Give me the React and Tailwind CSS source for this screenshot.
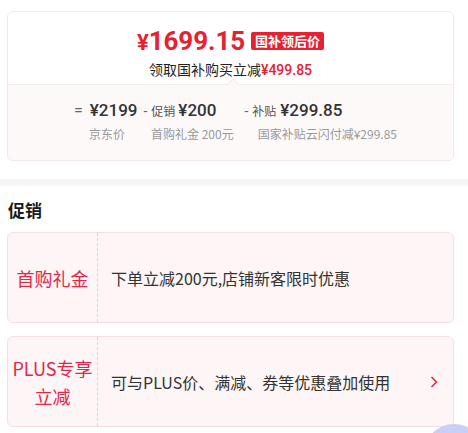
import React from "react";

const cn = { fontFamily: '"Noto Sans CJK SC", sans-serif' };

function PromoCard({ title, desc, arrow }) {
  return (
    <div className="flex h-[91px] rounded-md border border-[#f6dfe3] bg-[#fdf5f6]">
      <div className="w-[90px] shrink-0 flex items-center justify-center border-r border-dashed border-[#f0cdd3] text-[18px] leading-[28px] text-[#e0294a] text-center">
        {title}
      </div>
      <div className="flex-1 flex items-center pl-[13px] pr-[14px] text-[16px] text-[#333]">
        <span className="flex-1">{desc}</span>
        {arrow && (
          <svg width="8" height="12" viewBox="0 0 8 12" className="mr-[1px]">
            <path d="M1.5 1 L6.5 6 L1.5 11" fill="none" stroke="#e0294a" strokeWidth="1.6" />
          </svg>
        )}
      </div>
    </div>
  );
}

export default function App() {
  return (
    <div
      className="relative w-[468px] h-[433px] overflow-hidden bg-white"
      style={{ fontFamily: 'Roboto, "Noto Sans CJK SC", sans-serif' }}
    >
      {/* price card */}
      <div className="pt-[11px] pl-[7px] pr-[14px]">
        <div className="rounded-md border border-[#f0e8ea] overflow-hidden">
          <div className="h-[72px] flex flex-col items-center pt-[16px]">
            <div className="flex items-center gap-[6px] text-[#e62232]">
              <span className="flex items-baseline font-bold leading-none">
                <span className="text-[22px]">¥</span>
                <span className="text-[26px] tracking-[-0.1px]">1699.15</span>
              </span>
              <span
                className="h-[18px] px-[4px] flex items-center rounded-[2px] bg-[#e62232] text-white text-[13px] font-bold"
                style={cn}
              >
                国补领后价
              </span>
            </div>
            <div className="mt-[7px] text-[14px] leading-[16px] text-[#222]">
              <span style={cn}>领取国补购买立减</span>
              <span className="text-[#e62232] font-medium">¥499.85</span>
            </div>
          </div>
          <div className="relative h-[76px] border-t border-[#f3ecee] bg-[#fdf9f9] pl-[66px] pt-[14px]">
            <div className="absolute -top-[5px] left-[221px] w-[8px] h-[8px] rotate-45 bg-[#fdf9f9] border-l border-t border-[#f3ecee]" />
            <div className="flex items-baseline text-[#333] leading-[22px]">
              <span className="text-[16px] text-[#666]">=</span>
              <span className="ml-[7px] text-[17px] font-medium">¥2199</span>
              <span className="ml-[6px] text-[14px] text-[#666]">-</span>
              <span className="ml-[4px] text-[12px] text-[#555]" style={cn}>促销</span>
              <span className="ml-[3px] text-[17px] font-medium">¥200</span>
              <span className="ml-[28px] text-[14px] text-[#666]">-</span>
              <span className="ml-[4px] text-[12px] text-[#555]" style={cn}>补贴</span>
              <span className="ml-[4px] text-[17px] font-medium">¥299.85</span>
            </div>
            <div className="mt-[4px] flex text-[12px] leading-[16px] text-[#999]" style={cn}>
              <span className="ml-[15px]">京东价</span>
              <span className="ml-[26px]">首购礼金 200元</span>
              <span className="ml-[24px]">国家补贴云闪付减¥299.85</span>
            </div>
          </div>
        </div>
      </div>

      {/* band */}
      <div className="mt-[18px] h-[7px] bg-[#f6f6f8]" />

      {/* promotions */}
      <div className="pl-[7px] pr-[14px]" style={cn}>
        <div className="pt-[13px] pl-[1px] text-[17px] leading-[22px] font-bold text-[#1a1a1a]">促销</div>
        <div className="mt-[11px] flex flex-col gap-[13px]">
          <PromoCard title="首购礼金" desc="下单立减200元,店铺新客限时优惠" />
          <PromoCard
            title={
              <span>
                PLUS专享
                <br />
                立减
              </span>
            }
            desc="可与PLUS价、满减、券等优惠叠加使用"
            arrow
          />
        </div>
      </div>

      {/* floating button peek */}
      <div className="absolute left-[424px] top-[424px] w-[60px] h-[60px] rounded-full bg-[#c9d0f7]" />
    </div>
  );
}
